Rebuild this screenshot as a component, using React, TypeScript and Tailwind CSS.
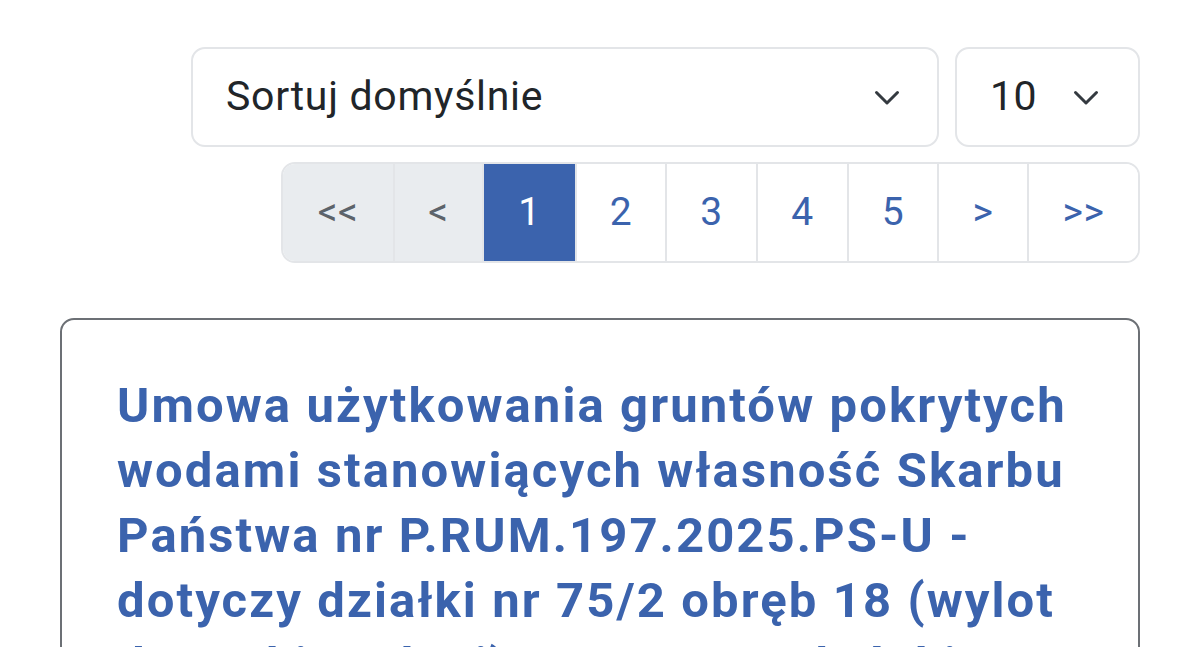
import React from 'react';

const BLUE = 'text-[#3b63ad]';

function Chevron() {
  return (
    <svg width="36" height="36" viewBox="0 0 24 24" fill="none" stroke="#343a40" strokeWidth="2" strokeLinecap="round" strokeLinejoin="round">
      <path d="M5 9l7 7 7-7" />
    </svg>
  );
}

const pages = [
  { label: '<<', w: 'w-[110px]', disabled: true },
  { label: '<', w: 'w-[89px]', disabled: true },
  { label: '1', w: 'w-[93px]', active: true },
  { label: '2', w: 'w-[90px]' },
  { label: '3', w: 'w-[91px]' },
  { label: '4', w: 'w-[91px]' },
  { label: '5', w: 'w-[90px]' },
  { label: '>', w: 'w-[90px]' },
  { label: '>>', w: 'w-[111px]' },
];

export default function App() {
  return (
    <div className="w-[1200px] h-[647px] overflow-hidden bg-white font-['Roboto',sans-serif] px-[60px] pt-[47px]">
      <div className="flex justify-end gap-4">
        <div className="w-[748px] h-[100px] border-2 border-[#e3e5e8] rounded-[14px] flex items-center justify-between pl-[33px] pr-[32px]">
          <span className="text-[41px] tracking-[0.7px] text-[#212529]">Sortuj domyślnie</span>
          <Chevron />
        </div>
        <div className="w-[185px] h-[100px] border-2 border-[#e3e5e8] rounded-[14px] flex items-center justify-between pl-[33px] pr-[34px]">
          <span className="text-[41px] tracking-[0.5px] text-[#212529]">10</span>
          <Chevron />
        </div>
      </div>

      <div className="flex justify-end mt-[15px]">
        <div className="flex h-[101px] border-2 border-[#e3e5e8] rounded-[14px] overflow-hidden">
          {pages.map((p, i) => (
            <div
              key={i}
              className={`${p.w} flex items-center justify-center text-[39px] tracking-[0.5px] ${i > 0 ? 'border-l-2 border-[#e3e5e8]' : ''} ${
                p.active ? 'bg-[#3b63ad] text-white border-[#3b63ad]' : p.disabled ? 'bg-[#e9ecef] text-[#5c636a]' : `bg-white ${BLUE}`
              }`}
            >
              {p.label}
            </div>
          ))}
        </div>
      </div>

      <div className="mt-[55px] border-2 border-[#6c7075] rounded-[14px] px-[55px] pt-[53px] pb-10">
        <h2 className={`text-[49px] leading-[65px] tracking-[2.1px] font-bold ${BLUE}`}>
          Umowa użytkowania gruntów pokrytych wodami stanowiących własność Skarbu Państwa nr P.RUM.197.2025.PS-U - dotyczy działki nr 75/2 obręb 18 (wylot do rzeki Raduni) - Pruszcz Gdański
        </h2>
      </div>
    </div>
  );
}
